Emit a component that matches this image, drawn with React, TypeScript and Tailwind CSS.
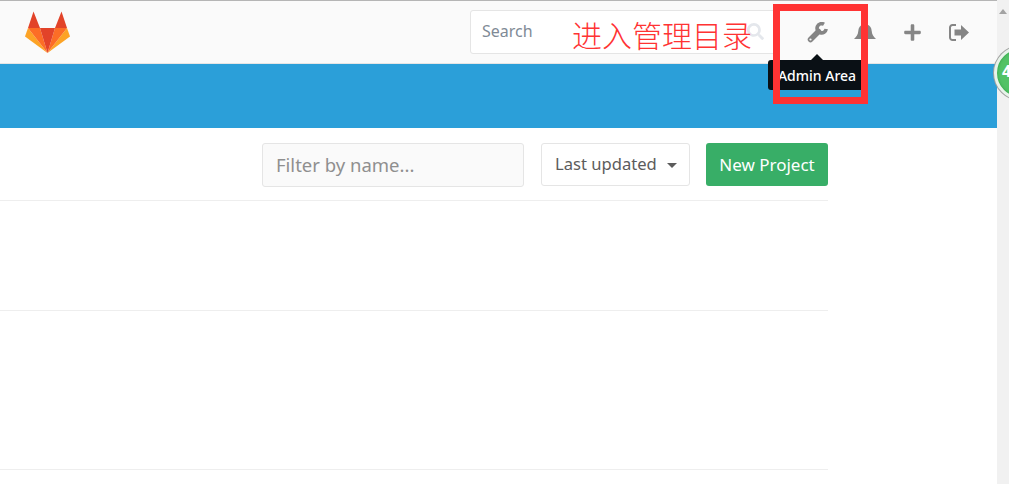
import { FaPlus, FaSearch } from "react-icons/fa";

function Logo() {
  return (
    <svg width="46" height="43" viewBox="25 11 46 43" className="block">
      <polygon points="33.500,11.500 40,28 28,28" fill="#e24329" />
      <polygon points="61.500,11.500 55,28 67,28" fill="#e24329" />
      <polygon points="28,28 25,36.500 47.500,53" fill="#fca326" />
      <polygon points="67,28 70,36.500 47.500,53" fill="#fca326" />
      <polygon points="28,28 40,28 47.500,53" fill="#fc6d26" />
      <polygon points="67,28 55,28 47.500,53" fill="#fc6d26" />
      <polygon points="40,28 55,28 47.500,53" fill="#e24329" />
    </svg>
  );
}

function Wrench() {
  return (
    <svg width="21" height="21" viewBox="0 0 21 21" className="block">
      <path d="M3.500 17.500 11.500 9.500" stroke="#858585" strokeWidth="5.500" strokeLinecap="round" fill="none" />
      <path d="M17 2.300A4.600 4.600 0 1 0 19.200 7" stroke="#858585" strokeWidth="3.600" fill="none" />
      <circle cx="3.500" cy="17.500" r="1.100" fill="#fafafa" />
    </svg>
  );
}

function Bell() {
  return (
    <svg width="22" height="19" viewBox="0 0 22 19" fill="#858585" className="block">
      <path d="M11 0C10 0 9.200.8 9 1.500 5.800 2.300 4.500 5 4.300 8 4 11.500 2.500 13.500 0 16h22c-2.500-2.500-4-4.500-4.300-8C17.500 5 16.200 2.300 13 1.500 12.800.8 12 0 11 0Z" />
      <path d="M8.500 16.800a2.500 2.200 0 0 0 5 0Z" />
    </svg>
  );
}

function SignOut() {
  return (
    <svg width="20" height="17" viewBox="0 0 20 17" fill="#858585" className="block">
      <path d="M7 1H3.500A2.500 2.500 0 0 0 1 3.500v10A2.500 2.500 0 0 0 3.500 16H7" fill="none" stroke="#858585" strokeWidth="2" />
      <path d="M12 1 20 8.500 12 16V11.500H5.500V5.500H12Z" />
    </svg>
  );
}

export default function App() {
  return (
    <div className="relative flex h-[484px] w-[1009px] overflow-hidden bg-white font-['Noto_Sans','Open_Sans',sans-serif]">
      <div className="flex w-[997px] flex-col">
        <header className="flex h-[64px] items-center border-t border-b border-t-[#b5b5b5] border-b-[#e5e5e5] bg-[#fafafa] pl-[25px]">
          <Logo />
          <div className="ml-[399px] flex h-[44px] w-[310px] items-center justify-between rounded-[3px] border border-[#e5e5e5] bg-white pb-[2px] pl-[11px] pr-[15px] text-[16px] text-[#7f8a96]">
            <span>Search</span>
            <FaSearch className="text-[17px] text-[#e4e7ec]" />
          </div>
          <nav className="ml-[27px] flex items-center gap-[27px] text-[#858585]">
            <Wrench />
            <div className="-ml-px"><Bell /></div>
            <FaPlus className="text-[19px]" />
            <SignOut />
          </nav>
        </header>
        <div className="h-[64px] bg-[#2b9fd9]" />
        <main className="w-[828px]">
          <div className="flex h-[73px] items-start justify-end border-b border-[#eeeeee] pt-[15px]">
            <div className="flex h-[44px] w-[262px] items-center rounded-[3px] border border-[#e5e5e5] bg-[#fafafa] px-[13px] text-[18.500px] text-[#8f8f8f]">
              Filter by name...
            </div>
            <div className="ml-[17px] flex h-[43px] w-[149px] items-center rounded-[3px] border border-[#e5e5e5] bg-white pl-[13px] text-[16.600px] text-[#5c5c5c]">
              Last updated
              <span className="ml-[10px] mt-[2px] h-0 w-0 border-x-[5px] border-t-[5px] border-x-transparent border-t-[#5c5c5c]" />
            </div>
            <div className="ml-[16px] flex h-[43px] w-[122px] items-center justify-center rounded-[3px] bg-[#38ae67] text-[17px] text-white">
              New Project
            </div>
          </div>
          <div className="h-[110px] border-b border-[#eeeeee]" />
          <div className="h-[159px] border-b border-[#eeeeee]" />
        </main>
      </div>
      <aside className="relative w-[12px] bg-[#f1f1f1]">
        <span className="absolute left-[2px] top-[9px] h-0 w-0 border-x-[4px] border-b-[5px] border-x-transparent border-b-[#a3a3a3]" />
      </aside>

      <div className="absolute left-[768px] top-[60px] flex h-[30px] w-[98px] items-center justify-center rounded-[3px] bg-[#0a1015] text-[14px] font-medium text-white">
        Admin Area
      </div>
      <span className="absolute left-[811px] top-[54px] h-0 w-0 border-x-[6px] border-b-[6px] border-x-transparent border-b-[#0a1015]" />
      <div className="absolute left-[773px] top-[4px] h-[100px] w-[95px] border-[7px] border-[#ff3333]" />
      <div className="absolute left-[572px] top-[13px] font-['Noto_Sans_CJK_SC',sans-serif] text-[30px] font-light leading-[42px] text-[#ff3333]">
        进入管理目录
      </div>
      <div className="absolute left-[994px] top-[46px] flex h-[54px] w-[54px] items-center rounded-full border-[3px] border-[#e8f3ea] bg-[#52c266] pb-[4px] pl-[5px] text-[16px] font-bold text-white shadow-[0_0_0_1px_#a0a0a0,inset_0_0_3px_#2a9a3f]">
        4
      </div>
    </div>
  );
}
